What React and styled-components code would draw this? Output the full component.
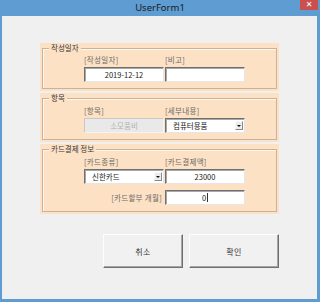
import React from "react";
import styled, { createGlobalStyle } from "styled-components";

const GlobalStyle = createGlobalStyle`
  html, body { margin: 0; padding: 0; }
  body {
    width: 320px;
    height: 302px;
    overflow: hidden;
    font-family: "Noto Sans CJK KR", "Noto Sans", sans-serif;
  }
`;

const Window = styled.div`
  width: 320px;
  height: 302px;
  display: flex;
  flex-direction: column;
  background: #5e9cd2;
  box-sizing: border-box;
`;

const TitleBar = styled.div`
  position: relative;
  height: 16px;
  flex: none;
  display: flex;
  align-items: center;
  justify-content: center;
`;

const Title = styled.span`
  font-family: "Noto Sans", "Liberation Sans", sans-serif;
  font-size: 9.5px;
  line-height: 14px;
  color: #1b1b1b;
`;

const CloseButton = styled.div`
  position: absolute;
  top: 0;
  right: 2px;
  width: 18px;
  height: 10px;
  background: #c9504e;
  color: #fff;
  font-family: "DejaVu Sans", sans-serif;
  font-size: 8px;
  font-weight: bold;
  line-height: 10px;
  text-align: center;
`;

const Body = styled.div`
  flex: 1;
  margin: 0 3px 3px 2px;
  background: #f0f0f0;
  display: flex;
  flex-direction: column;
  padding: 27px 0 0 38px;
  gap: 2px;
`;

const FrameBox = styled.div`
  width: 239px;
  box-sizing: border-box;
  background: #fde1c4;
  padding: 0 2px 2px 2px;
`;

const Fieldset = styled.fieldset`
  margin: 0;
  border: 1px solid #c9b29a;
  box-shadow: inset 1px 1px 0 #fff6ec;
  padding: ${(p) => p.$pt}px 0 ${(p) => p.$pb}px 0;
  min-width: 0;
`;

const Legend = styled.legend`
  font-size: 7.5px;
  line-height: 10px;
  color: #3a3a3a;
  padding: 0 2px;
  margin-left: 6px;
  background: #fde1c4;
`;

const Content = styled.div`
  margin-left: 41px;
  display: flex;
  flex-direction: column;
  gap: 6px;
`;

const Grid = styled.div`
  display: grid;
  grid-template-columns: 80px 80px;
  column-gap: 1px;
  row-gap: 2px;
  align-items: center;
`;

const Label = styled.div`
  font-size: 7.5px;
  line-height: 10px;
  color: #6a6a6a;
  letter-spacing: 0.3px;
  text-align: ${(p) => (p.$right ? "right" : "left")};
  padding-right: ${(p) => (p.$right ? "2px" : "0")};
  white-space: nowrap;
`;

const Field = styled.div`
  position: relative;
  height: 15px;
  box-sizing: border-box;
  background: ${(p) => (p.$disabled ? "#e9e9e9" : "#ffffff")};
  border: 1px solid;
  border-color: ${(p) =>
    p.$disabled ? "#c8c8c8 #f4f4f4 #f4f4f4 #c8c8c8" : "#6f6f6f #e6e6e6 #e6e6e6 #6f6f6f"};
  box-shadow: ${(p) => (p.$disabled ? "none" : "inset 1px 1px 0 #a8a8a8")};
  display: flex;
  align-items: center;
  justify-content: ${(p) => (p.$left ? "flex-start" : "center")};
  padding-left: ${(p) => (p.$left ? "7px" : "0")};
  font-size: 7.5px;
  color: ${(p) => (p.$disabled ? "#b3b3b3" : "#222")};
  white-space: nowrap;
`;

const Caret = styled.span`
  display: inline-block;
  width: 1px;
  height: 9px;
  margin-left: 1px;
  background: #333;
`;

const DropButton = styled.div`
  position: absolute;
  right: 1px;
  top: 2px;
  width: 8px;
  height: 9px;
  box-sizing: border-box;
  background: #ececec;
  border: 1px solid;
  border-color: #fafafa #8a8a8a #8a8a8a #fafafa;
  display: flex;
  align-items: center;
  justify-content: center;

  &::after {
    content: "";
    border-left: 2px solid transparent;
    border-right: 2px solid transparent;
    border-top: 2px solid #111;
  }
`;

const ButtonRow = styled.div`
  margin-top: 18px;
  width: 239px;
  display: flex;
  justify-content: flex-end;
  gap: 6px;
`;

const Button = styled.div`
  width: ${(p) => p.$w}px;
  height: 34px;
  box-sizing: border-box;
  background: #f1f1f1;
  border: 1px solid;
  border-color: #fdfdfd #707070 #707070 #fdfdfd;
  box-shadow: inset -1px -1px 0 #a5a5a5;
  display: flex;
  align-items: center;
  justify-content: center;
  font-size: 8px;
  letter-spacing: 0.5px;
  color: #333;
`;

export default function App() {
  return (
    <>
      <GlobalStyle />
      <Window>
        <TitleBar>
          <Title>UserForm1</Title>
          <CloseButton>✕</CloseButton>
        </TitleBar>
        <Body>
          <FrameBox>
            <Fieldset $pt={2} $pb={6}>
              <Legend>작성일자</Legend>
              <Content>
                <Grid>
                  <Label>[작성일자]</Label>
                  <Label>[비고]</Label>
                  <Field>2019-12-12</Field>
                  <Field />
                </Grid>
              </Content>
            </Fieldset>
          </FrameBox>
          <FrameBox>
            <Fieldset $pt={3} $pb={6}>
              <Legend>항목</Legend>
              <Content>
                <Grid>
                  <Label>[항목]</Label>
                  <Label>[세부내용]</Label>
                  <Field $disabled>소모품비</Field>
                  <Field $left>
                    컴퓨터용품
                    <DropButton />
                  </Field>
                </Grid>
              </Content>
            </Fieldset>
          </FrameBox>
          <FrameBox>
            <Fieldset $pt={3} $pb={6}>
              <Legend>카드결제 정보</Legend>
              <Content>
                <Grid>
                  <Label>[카드종류]</Label>
                  <Label>[카드결제액]</Label>
                  <Field $left>
                    신한카드
                    <DropButton />
                  </Field>
                  <Field>23000</Field>
                </Grid>
                <Grid>
                  <Label $right>[카드할부 개월]</Label>
                  <Field>
                    0<Caret />
                  </Field>
                </Grid>
              </Content>
            </Fieldset>
          </FrameBox>
          <ButtonRow>
            <Button $w={80}>취소</Button>
            <Button $w={90}>확인</Button>
          </ButtonRow>
        </Body>
      </Window>
    </>
  );
}
